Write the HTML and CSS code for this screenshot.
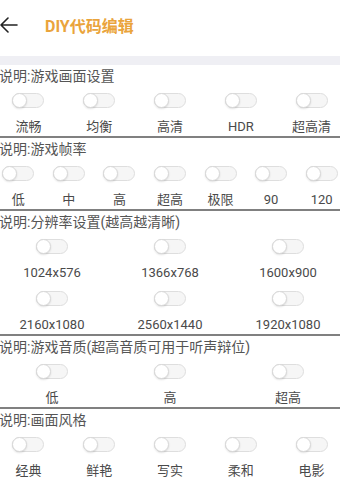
FILE: index.html
```html
<!DOCTYPE html>
<html lang="zh-CN">
<head>
  <meta charset="UTF-8">
  <meta name="viewport" content="width=device-width, initial-scale=1.0">
  <title>DIY代码编辑</title>
  <link rel="stylesheet" href="styles.css">
</head>
<body>
  <div class="page">
    <header class="topbar">
      <svg class="back" width="18" height="16" viewBox="0 0 18 16">
        <path d="M17 8H1M8 1L1 8L8 15" fill="none" stroke="#222" stroke-width="1.6" stroke-linecap="round" stroke-linejoin="round"/>
      </svg>
      <span class="title">DIY代码编辑</span>
    </header>
    <div class="band"></div>

    <section class="group">
      <div class="group-title">说明:游戏画面设置</div>
      <div class="options cols-5">
        <label class="opt"><span class="switch"></span><span class="name">流畅</span></label>
        <label class="opt"><span class="switch"></span><span class="name">均衡</span></label>
        <label class="opt"><span class="switch"></span><span class="name">高清</span></label>
        <label class="opt"><span class="switch"></span><span class="name">HDR</span></label>
        <label class="opt"><span class="switch"></span><span class="name">超高清</span></label>
      </div>
    </section>

    <section class="group">
      <div class="group-title">说明:游戏帧率</div>
      <div class="options cols-7">
        <label class="opt"><span class="switch"></span><span class="name">低</span></label>
        <label class="opt"><span class="switch"></span><span class="name">中</span></label>
        <label class="opt"><span class="switch"></span><span class="name">高</span></label>
        <label class="opt"><span class="switch"></span><span class="name">超高</span></label>
        <label class="opt"><span class="switch"></span><span class="name">极限</span></label>
        <label class="opt"><span class="switch"></span><span class="name">90</span></label>
        <label class="opt"><span class="switch"></span><span class="name">120</span></label>
      </div>
    </section>

    <section class="group">
      <div class="group-title">说明:分辨率设置(越高越清晰)</div>
      <div class="options cols-3">
        <label class="opt"><span class="switch"></span><span class="name">1024x576</span></label>
        <label class="opt"><span class="switch"></span><span class="name">1366x768</span></label>
        <label class="opt"><span class="switch"></span><span class="name">1600x900</span></label>
        <label class="opt"><span class="switch"></span><span class="name">2160x1080</span></label>
        <label class="opt"><span class="switch"></span><span class="name">2560x1440</span></label>
        <label class="opt"><span class="switch"></span><span class="name">1920x1080</span></label>
      </div>
    </section>

    <section class="group">
      <div class="group-title">说明:游戏音质(超高音质可用于听声辩位)</div>
      <div class="options cols-3">
        <label class="opt"><span class="switch"></span><span class="name">低</span></label>
        <label class="opt"><span class="switch"></span><span class="name">高</span></label>
        <label class="opt"><span class="switch"></span><span class="name">超高</span></label>
      </div>
    </section>

    <section class="group">
      <div class="group-title">说明:画面风格</div>
      <div class="options cols-5">
        <label class="opt"><span class="switch"></span><span class="name">经典</span></label>
        <label class="opt"><span class="switch"></span><span class="name">鲜艳</span></label>
        <label class="opt"><span class="switch"></span><span class="name">写实</span></label>
        <label class="opt"><span class="switch"></span><span class="name">柔和</span></label>
        <label class="opt"><span class="switch"></span><span class="name">电影</span></label>
      </div>
    </section>
  </div>
</body>
</html>
```

FILE: styles.css
```css
html, body {
  margin: 0;
  padding: 0;
  overflow: hidden;
  background: #fff;
}

body {
  font-family: Roboto, "Noto Sans CJK SC", sans-serif;
  color: #444;
}

.page {
  width: 354px;
  margin-left: -7px;
}

.topbar {
  height: 56px;
  display: flex;
  align-items: center;
  gap: 27px;
  padding-left: 7px;
  padding-bottom: 6px;
  box-sizing: border-box;
}

.back {
  display: block;
}

.title {
  font-size: 16px;
  font-weight: bold;
  color: #eaa43c;
}

.band {
  height: 9px;
  background: #efeff4;
}

.group {
  border-bottom: 2px solid #808080;
}

.group:last-child {
  border-bottom: none;
}

.group-title {
  height: 22px;
  line-height: 22px;
  padding-left: 6px;
  font-size: 14px;
  color: #555;
  white-space: nowrap;
}

.options {
  display: grid;
  row-gap: 3px;
}

.cols-3 { grid-template-columns: repeat(3, 1fr); }
.cols-5 { grid-template-columns: repeat(5, 1fr); }
.cols-7 { grid-template-columns: repeat(7, 1fr); }

.opt {
  display: flex;
  flex-direction: column;
  align-items: center;
  padding-top: 6px;
  padding-bottom: 1px;
  gap: 11px;
}

.switch {
  position: relative;
  width: 30px;
  height: 13px;
  border: 1px solid #dedede;
  border-radius: 8px;
  background: #f6f6f6;
}

.switch::before {
  content: "";
  position: absolute;
  left: -1px;
  top: -1px;
  width: 13px;
  height: 13px;
  border: 1px solid #d8d8d8;
  border-radius: 50%;
  background: #fff;
  box-shadow: 0 1px 2px rgba(0, 0, 0, 0.12);
}

.name {
  height: 16px;
  line-height: 16px;
  font-size: 13px;
  color: #4a4a4a;
  white-space: nowrap;
}
```
